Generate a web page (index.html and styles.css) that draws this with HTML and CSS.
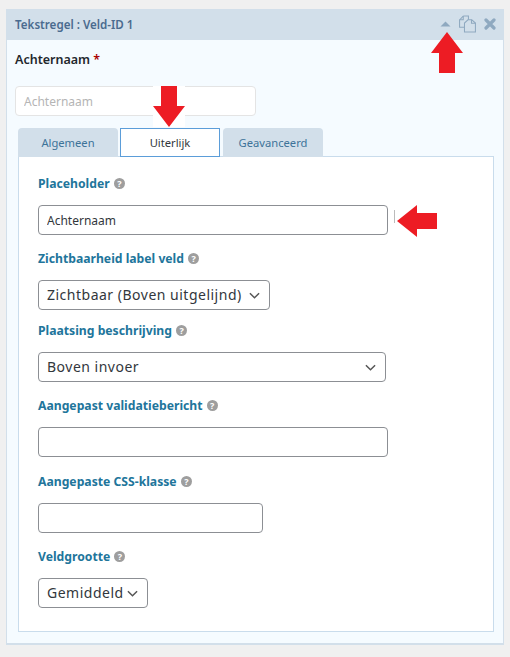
FILE: index.html
```html
<!DOCTYPE html>
<html lang="en">
<head>
  <meta charset="UTF-8">
  <title>Tekstregel</title>
  <link rel="stylesheet" href="styles.css">
</head>
<body>

  <div class="panel">
    <!-- Header -->
    <div class="panel-head">
      <span class="panel-title">Tekstregel : Veld-ID 1</span>
      <div class="panel-icons">
        <svg class="icon-up" width="11" height="6" viewBox="0 0 11 6"><path d="M5.5 0.5 L10.5 5.5 L0.5 5.5 Z" fill="#8fa9c0"/></svg>
        <svg class="icon-copy" width="17" height="18" viewBox="0 0 18 18" fill="none" stroke="#8fa9c0" stroke-width="1.1">
          <path d="M4.5 .6 H10 V4.5 M4.5 .6 L.6 4.6 V12.5 H5.5"/>
          <path d="M4.5 .6 V4.6 H.6"/>
          <path d="M9.5 4.6 H13.5 L17.4 8 V17.4 H5.8 V8 Z"/>
          <path d="M13.2 4.6 V8.3 H17.4"/>
        </svg>
        <svg class="icon-close" width="12" height="12" viewBox="0 0 12 12"><path d="M2 2 L10 10 M10 2 L2 10" stroke="#8fa9c0" stroke-width="3.2" stroke-linecap="round"/></svg>
      </div>
    </div>

    <div class="panel-body">
      <div class="preview-label">Achternaam <span class="req">*</span></div>
      <input class="preview-input" type="text" placeholder="Achternaam">

      <!-- Tabs -->
      <div class="tabs">
        <div class="tab">Algemeen</div>
        <div class="tab active">Uiterlijk</div>
        <div class="tab">Geavanceerd</div>
      </div>

      <div class="tab-content">
        <div class="field">
          <label class="field-label">Placeholder <span class="help">?</span></label>
          <input class="field-input w-350" type="text" value="Achternaam">
        </div>
        <div class="field field-short">
          <label class="field-label">Zichtbaarheid label veld <span class="help">?</span></label>
          <div class="fake-select w-232">Zichtbaar (Boven uitgelijnd)
            <svg class="chevron" width="11" height="7" viewBox="0 0 12 7"><path d="M1 1 L6 6 L11 1" fill="none" stroke="#555" stroke-width="1.6"/></svg>
          </div>
        </div>
        <div class="field">
          <label class="field-label">Plaatsing beschrijving <span class="help">?</span></label>
          <div class="fake-select w-348">Boven invoer
            <svg class="chevron" width="11" height="7" viewBox="0 0 12 7"><path d="M1 1 L6 6 L11 1" fill="none" stroke="#555" stroke-width="1.6"/></svg>
          </div>
        </div>
        <div class="field field-tall">
          <label class="field-label">Aangepast validatiebericht <span class="help">?</span></label>
          <input class="field-input w-350" type="text">
        </div>
        <div class="field">
          <label class="field-label">Aangepaste CSS-klasse <span class="help">?</span></label>
          <input class="field-input w-225" type="text">
        </div>
        <div class="field">
          <label class="field-label">Veldgrootte <span class="help">?</span></label>
          <div class="fake-select w-110">Gemiddeld
            <svg class="chevron" width="11" height="7" viewBox="0 0 12 7"><path d="M1 1 L6 6 L11 1" fill="none" stroke="#555" stroke-width="1.6"/></svg>
          </div>
        </div>
      </div>
    </div>
  </div>

  <!-- Red annotation arrows on top of the screenshot -->
  <svg class="arrow arrow-up" width="32" height="41" viewBox="0 0 32 41"><path d="M16 0 L32 21 L24 21 L24 41 L8 41 L8 21 L0 21 Z" fill="#ed1c24"/></svg>
  <div class="arrow arrow-down-bg"></div>
  <svg class="arrow arrow-down" width="32" height="41" viewBox="0 0 32 41"><path d="M8 0 L24 0 L24 20 L32 20 L16 41 L0 20 L8 20 Z" fill="#ed1c24"/></svg>
  <div class="arrow caret-mark"></div>
  <svg class="arrow arrow-left" width="40" height="32" viewBox="0 0 40 32"><path d="M0 16 L20 0 L20 8 L40 8 L40 24 L20 24 L20 32 Z" fill="#ed1c24"/></svg>

</body>
</html>
```

FILE: styles.css
```css
body { margin: 0; height: 657px; overflow: hidden; background: #f0f0f0; font-family: "Noto Sans", "Open Sans", sans-serif; color: #32373c; }

.panel { width: 498px; margin: 9px 0 0 6px; box-sizing: border-box; height: 636px; background: #f5fbff; border-right: 1px solid #d2dfea; border-bottom: 2px solid #d2dfea; border-left: 1px solid #d2dfea; }
.panel-head { height: 31px; margin: 0 -1px; padding: 0 8px 0 9px; background: #d2dfea; display: flex; align-items: center; justify-content: space-between; }
.panel-title { font-size: 11.6px; font-weight: 600; color: #4a6b8f; }
.panel-icons { display: flex; align-items: center; margin-top: -1px; }
.icon-up { margin-right: 8px; }
.icon-copy { margin-right: 8px; }

.panel-body { padding: 0 9px 0 8px; }
.preview-label { padding-top: 11px; height: 35px; font-size: 12.5px; font-weight: 600; color: #23282d; }
.req { color: #a00; }
.preview-input { display: block; width: 241px; height: 30px; box-sizing: border-box; padding: 0 8px; border: 1px solid #e4e4e4; border-radius: 4px; background: #fff; font-family: inherit; font-size: 12px; }
.preview-input::placeholder { color: #b5b5b5; opacity: 1; }

.tabs { display: flex; gap: 2px; margin: 12px 0 0 3px; position: relative; z-index: 1; }
.tab { width: 100px; height: 29px; box-sizing: border-box; background: #d2dfea; border-radius: 4px 4px 0 0; text-align: center; font-size: 11.2px; line-height: 29px; color: #3d7399; }
.tab:last-child { margin-left: 1px; }
.tab.active { background: #fff; border: 1px solid #5b9dd9; border-radius: 0; line-height: 27px; color: #32373c; }

.tab-content { height: 476px; box-sizing: border-box; margin-left: 3px; margin-top: -1px; padding: 18px 0 0 19px; background: #fff; border: 1px solid #c9dcec; }
.field { height: 75px; }
.field-short { height: 72px; }
.field-tall { height: 76px; }
.field-label { display: block; height: 30px; font-size: 12.2px; font-weight: 700; line-height: 17px; color: #21759b; }
.help { display: inline-block; width: 11px; height: 11px; margin-left: 1px; border-radius: 50%; background: #9e9e9e; color: #fff; font-size: 9px; font-weight: 700; line-height: 11px; text-align: center; vertical-align: 1px; }

.field-input { display: block; height: 30px; box-sizing: border-box; padding: 0 8px; border: 1px solid #8c8f94; border-radius: 4px; background: #fff; font-family: inherit; font-size: 12px; color: #32373c; }
.fake-select { position: relative; height: 30px; box-sizing: border-box; padding: 0 8px; border: 1px solid #8c8f94; border-radius: 4px; background: #fff; font-size: 14px; line-height: 28px; letter-spacing: .5px; color: #32373c; white-space: nowrap; }
.chevron { position: absolute; right: 9px; top: 11px; }
.w-350 { width: 350px; }
.w-348 { width: 348px; }
.w-232 { width: 232px; }
.w-225 { width: 225px; }
.w-110 { width: 110px; }

.arrow { position: absolute; }
.arrow-up { left: 431px; top: 32px; }
.arrow-down-bg { left: 153px; top: 86px; width: 32px; height: 41px; background: #fff; }
.arrow-down { left: 153px; top: 86px; }
.arrow-left { left: 397px; top: 205px; }
.caret-mark { left: 394px; top: 210px; width: 1px; height: 13px; background: #bbb; }
```
